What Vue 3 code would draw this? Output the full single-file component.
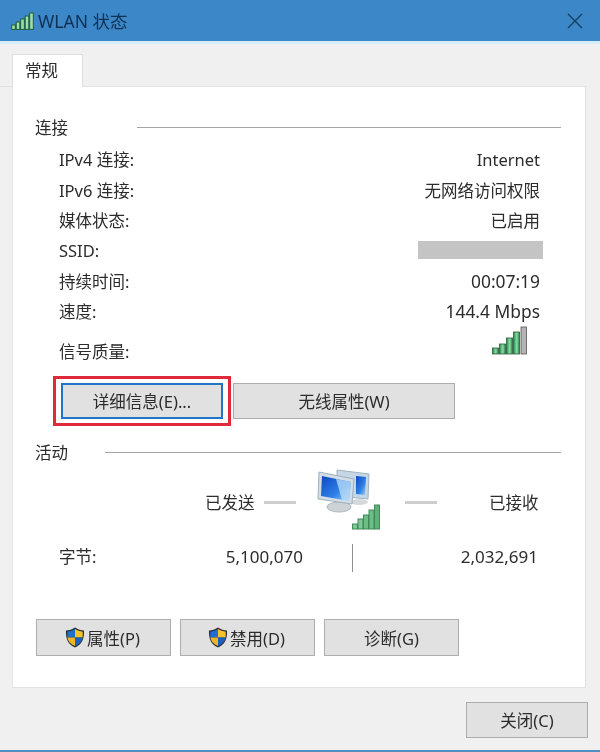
<script setup>
const rows = [
  { label: 'IPv4 连接:', value: 'Internet' },
  { label: 'IPv6 连接:', value: '无网络访问权限' },
  { label: '媒体状态:', value: '已启用' },
  { label: 'SSID:', value: '', masked: true },
  { label: '持续时间:', value: '00:07:19', wide: true },
  { label: '速度:', value: '144.4 Mbps', wide: true }
]
const bars = [0, 1, 2, 3, 4]
const actions = [
  { text: '属性(P)', shield: true },
  { text: '禁用(D)', shield: true },
  { text: '诊断(G)', shield: false }
]
</script>

<template>
  <div class="window">
    <header class="titlebar">
      <svg class="title-signal" width="23" height="18" viewBox="0 0 23 18">
        <rect v-for="i in bars" :key="i" :x="0.7 + i * 4.5" :y="13 - i * 3" width="3.6" :height="4.4 + i * 3" fill="#9fe0a8" stroke="#1c5a3c" stroke-width="1" />
      </svg>
      <span class="title-text">WLAN 状态</span>
      <svg class="title-close" width="16" height="16" viewBox="0 0 16 16">
        <path d="M1 1 L15 15 M15 1 L1 15" stroke="#173f63" stroke-width="1.4" fill="none" />
      </svg>
    </header>

    <div class="body">
      <div class="tabs"><div class="tab">常规</div></div>

      <main class="panel">
        <div class="section-head head-connect"><span class="connect-label">连接</span><i class="rule"></i></div>

        <div class="info">
          <div v-for="row in rows" :key="row.label" class="info-row">
            <span>{{ row.label }}</span>
            <span v-if="row.masked" class="mask"></span>
            <span v-else :class="{ wide: row.wide }">{{ row.value }}</span>
          </div>
          <div class="signal-row">
            <span>信号质量:</span>
            <svg width="36" height="29" viewBox="0 0 36 29">
              <defs>
                <linearGradient id="barGreen" x1="0" y1="0" x2="1" y2="0">
                  <stop offset="0" stop-color="#1e8f4c" />
                  <stop offset="0.55" stop-color="#8fdca5" />
                  <stop offset="1" stop-color="#25774a" />
                </linearGradient>
              </defs>
              <rect x="0.5" y="22" width="6" height="6" fill="url(#barGreen)" stroke="#2d5a3c" stroke-width="0.8" />
              <rect x="7.5" y="18" width="6" height="10" fill="url(#barGreen)" stroke="#2d5a3c" stroke-width="0.8" />
              <rect x="14.5" y="12" width="6" height="16" fill="url(#barGreen)" stroke="#2d5a3c" stroke-width="0.8" />
              <rect x="21.5" y="6" width="6" height="22" fill="url(#barGreen)" stroke="#2d5a3c" stroke-width="0.8" />
              <rect x="29" y="1" width="5.5" height="27" fill="#b4b4b4" stroke="#555" stroke-width="0.8" />
            </svg>
          </div>
        </div>

        <div class="detail-buttons">
          <div class="highlight"><button class="btn btn-focus">详细信息(E)...</button></div>
          <button class="btn btn-wireless">无线属性(W)</button>
        </div>

        <div class="section-head head-activity"><span class="activity-label">活动</span><i class="rule"></i></div>

        <div class="traffic">
          <span class="sent">已发送</span>
          <i class="dash"></i>
          <svg class="computers" width="66" height="62" viewBox="0 0 66 62">
            <defs>
              <linearGradient id="screen" x1="0" y1="0" x2="1" y2="1">
                <stop offset="0" stop-color="#0c49c4" />
                <stop offset="0.6" stop-color="#2f80e6" />
                <stop offset="1" stop-color="#a8d4f6" />
              </linearGradient>
            </defs>
            <ellipse cx="42" cy="33" rx="9" ry="3" fill="#d5d9dc" />
            <path d="M20 1 L52 5 L51 30 L20 27 Z" fill="#c5d6e4" stroke="#9fb2c2" />
            <path d="M39 7 L49 8 L48 26 L39 25 Z" fill="url(#screen)" />
            <ellipse cx="22" cy="38" rx="12" ry="5" fill="#ccd2d5" stroke="#b0b8bc" />
            <path d="M2 3 L37 10 L35 35 L1 30 Z" fill="#d2dde6" stroke="#9fb0be" />
            <path d="M5 7 L34 13 L32 32 L4 27 Z" fill="url(#screen)" />
            <path d="M19 10 L34 13 L32 32 L25 31 Z" fill="#bfe0f7" opacity="0.75" />
            <rect x="35.5" y="55" width="5" height="5" fill="#7cc792" stroke="#3f8a5b" />
            <rect x="41" y="50" width="5" height="10" fill="#7cc792" stroke="#3f8a5b" />
            <rect x="46.5" y="46" width="5" height="14" fill="#6dbd85" stroke="#3f8a5b" />
            <rect x="52" y="41" width="5" height="19" fill="#6dbd85" stroke="#3f8a5b" />
            <rect x="57.5" y="36" width="5" height="24" fill="#5fb17a" stroke="#3f8a5b" />
          </svg>
          <i class="dash dash-right"></i>
          <span class="received">已接收</span>
        </div>

        <div class="bytes">
          <span class="bytes-label">字节:</span>
          <span class="bytes-sent">5,100,070</span>
          <i class="divider"></i>
          <span class="bytes-received">2,032,691</span>
        </div>

        <div class="actions">
          <button v-for="a in actions" :key="a.text" class="btn btn-action">
            <svg v-if="a.shield" class="shield" width="22" height="23" viewBox="0 0 22 22">
              <path d="M11 1 C14 3 17 4 20 4 C20.5 12 18 18 11 21 C4 18 1.5 12 2 4 C5 4 8 3 11 1 Z" fill="#2d2f36" />
              <path d="M11 2.6 V11 H3.4 C3.2 9 3.2 7 3.3 5.2 C6 5 8.6 4.2 11 2.6 Z" fill="#1f6fd0" />
              <path d="M11 2.6 C13.4 4.2 16 5 18.7 5.2 C18.8 7 18.8 9 18.6 11 H11 Z" fill="#f4c22b" />
              <path d="M3.4 11 H11 V19.5 C6.5 17.5 4 15 3.4 11 Z" fill="#f0b429" />
              <path d="M11 11 H18.6 C18 15 15.5 17.5 11 19.5 Z" fill="#1c62bd" />
            </svg>
            <span>{{ a.text }}</span>
          </button>
        </div>
      </main>

      <footer class="footer"><button class="btn btn-close">关闭(C)</button></footer>
    </div>
  </div>
</template>

<style scoped>
.window {
  width: 600px;
  height: 752px;
  display: flex;
  flex-direction: column;
  background: #f0f0f0;
  color: #2c2c2c;
  font-family: "Noto Sans", "Noto Sans CJK SC", sans-serif;
  font-size: 16.5px;
  overflow: hidden;
  border-bottom: 2px solid #4f8fc4;
  box-sizing: border-box;
  filter: blur(0.35px);
}
.titlebar {
  height: 41px;
  flex: none;
  background: #3c87c8;
  display: flex;
  align-items: center;
  padding: 0 17px 0 11px;
  color: #0f3154;
}
.title-signal { margin-right: 4px; }
.title-text { font-size: 17.5px; flex: 1; }
.body {
  flex: 1;
  display: flex;
  flex-direction: column;
  border-top: 3px solid #d6eefa;
  min-height: 0;
}
.tabs {
  height: 43px;
  flex: none;
  padding: 10px 0 0 12px;
  box-sizing: border-box;
  border-bottom: 1px solid #e2e2e2;
  margin: 0 14px 0 0;
}
.tab {
  width: 71px;
  height: 33px;
  background: #fff;
  border: 1px solid #dedede;
  border-bottom: none;
  box-sizing: border-box;
  padding: 0 12px;
  line-height: 31px;
  margin-bottom: -1px;
  font-size: 16.5px;
  position: relative;
}
.panel {
  height: 601px;
  flex: none;
  margin: 0 14px 0 12px;
  background: #fff;
  box-sizing: border-box;
  border-right: 1px solid #e0e0e0;
  border-bottom: 1px solid #e0e0e0;
  border-left: 1px solid #e6e6e6;
  display: flex;
  flex-direction: column;
}
.section-head {
  height: 20px;
  display: flex;
  align-items: center;
  padding: 0 24px 0 22px;
  flex: none;
}
.head-connect { margin-top: 30px; }
.connect-label { width: 102px; }
.activity-label { width: 70px; }
.rule {
  flex: 1;
  height: 1px;
  background: #a5a5a5;
}
.info {
  margin-top: 7px;
  padding: 0 45px 0 46px;
}
.info-row {
  height: 30.4px;
  display: flex;
  justify-content: space-between;
  align-items: center;
}
.wide { font-size: 17.4px; }
.mask {
  width: 125px;
  height: 18px;
  background: #c4c4c4;
  margin-right: -3px;
}
.signal-row {
  height: 36px;
  display: flex;
  justify-content: space-between;
  align-items: flex-end;
  line-height: 20px;
}
.signal-row svg {
  align-self: flex-start;
  margin-right: 12px;
}
.btn {
  height: 36px;
  box-sizing: border-box;
  background: #e1e1e1;
  border: 1px solid #adadad;
  color: #2c2c2c;
  font: inherit;
  padding: 0;
  display: flex;
  align-items: center;
  justify-content: center;
}
.detail-buttons {
  margin-top: 21px;
  padding-left: 48px;
  display: flex;
  gap: 10px;
}
.highlight {
  width: 162px;
  height: 36px;
  position: relative;
}
.highlight::after {
  content: "";
  position: absolute;
  inset: -7px -8px;
  border: 3px solid #e0293a;
  pointer-events: none;
}
.btn-focus {
  width: 100%;
  border: 2px solid #1f76c9;
}
.btn-wireless { width: 222px; }
.head-activity { margin-top: 23px; }
.traffic {
  height: 62px;
  margin-top: 7px;
  display: flex;
  align-items: center;
}
.sent { margin: 3px 0 0 192px; width: 50px; }
.dash {
  width: 32px;
  height: 3px;
  background: #cfcfcf;
  margin: 4px 0 0 9px;
}
.computers { margin-left: 21px; }
.dash-right { margin-left: 22px; }
.received { margin: 3px 0 0 52px; }
.bytes {
  margin-top: 10px;
  height: 30px;
  display: flex;
  align-items: center;
}
.bytes-label { margin-left: 46px; width: 100px; }
.bytes-sent { width: 144px; text-align: right; margin-right: 49px; font-size: 17px; }
.divider {
  width: 1px;
  height: 28px;
  background: #8e8e8e;
  margin-top: 4px;
}
.bytes-received { width: 185px; text-align: right; font-size: 17px; }
.actions {
  margin-top: 48px;
  padding-left: 23px;
  display: flex;
  gap: 9px;
}
.btn-action {
  width: 135px;
  height: 37px;
  gap: 1px;
}
.shield { margin-left: -3px; }
.footer {
  flex: 1;
  display: flex;
  justify-content: flex-end;
  align-items: flex-start;
  padding: 14px 12px 0 0;
}
.btn-close { width: 122px; }
</style>
